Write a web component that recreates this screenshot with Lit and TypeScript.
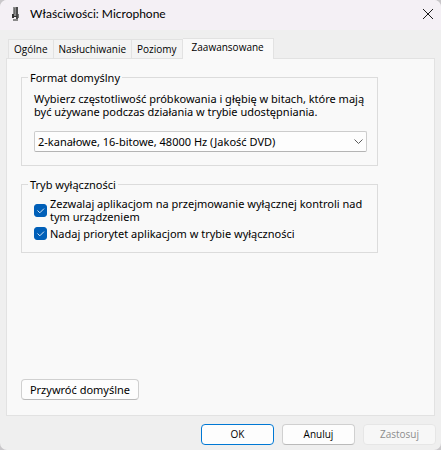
import { LitElement, html, css, svg } from "lit";
import { customElement, state } from "lit/decorators.js";

const TABS = ["Ogólne", "Nasłuchiwanie", "Poziomy", "Zaawansowane"];

@customElement("app-root")
export class AppRoot extends LitElement {
  @state() private active = 3;

  static styles = css`
    :host {
      display: block;
      background: #c9c7ca;
    }
    * { box-sizing: border-box; }
    .window {
      display: flex;
      flex-direction: column;
      min-height: 100vh;
      border-radius: 7px;
      overflow: hidden;
      background: #efefef;
      color: #000;
      font-family: "Noto Sans", "Open Sans", sans-serif;
      font-size: 11px;
      line-height: 13px;
    }
    button, select { font: inherit; color: inherit; margin: 0; }
    .titlebar {
      display: flex;
      align-items: center;
      height: 30px;
      padding: 0 5px 2px 10px;
      background: #f4f0f5;
    }
    .mic { width: 12px; height: 16px; }
    .title {
      flex: 1;
      margin: 0 0 0 8px;
      font-family: Lato, "Noto Sans", sans-serif;
      font-size: 12px;
      font-weight: 400;
      line-height: 16px;
    }
    .close {
      display: flex;
      padding: 2px;
      border: 0;
      background: none;
    }
    .close svg { width: 12px; height: 12px; }
    .tabs {
      display: flex;
      align-items: flex-end;
      height: 28px;
      padding: 0 8px;
    }
    .tab {
      height: 19px;
      padding: 0 5px;
      border: 1px solid #e2e2e2;
      border-width: 1px 1px 0 0;
      background: #f3f3f3;
      font-family: "Open Sans", sans-serif;
      font-size: 10px;
      white-space: nowrap;
    }
    .tab:first-child { border-left-width: 1px; }
    .tab.active {
      height: 21px;
      margin-bottom: -1px;
      padding: 0 9px 3px;
      background: #f9f9f9;
      z-index: 1;
    }
    .panel {
      flex: 1;
      display: flex;
      flex-direction: column;
      align-items: flex-start;
      margin: 0 6px;
      padding: 12px 56px 15px 14px;
      border: 1px solid #e2e2e2;
      background: #f9f9f9;
    }
    .group {
      align-self: stretch;
      min-width: 0;
      margin: 0 0 12px;
      padding: 8px 10px 13px 12px;
      border: 1px solid #dcdcdc;
    }
    .group.checks { padding: 6px 10px 12px 12px; }
    legend { margin-left: -6px; padding: 0 2px; }
    .text { margin: 0; }
    .combo { position: relative; margin-top: 13px; }
    .combo select {
      display: block;
      width: 100%;
      height: 21px;
      padding: 0 24px 0 3px;
      border: 1px solid #cccccc;
      border-bottom-color: #b4b4b4;
      border-radius: 2px;
      background: #fdfdfd;
      appearance: none;
    }
    .combo svg {
      position: absolute;
      right: 4px;
      top: 7px;
      width: 9px;
      height: 7px;
      pointer-events: none;
    }
    .check { display: flex; align-items: center; gap: 3px; }
    .check + .check { margin-top: 4px; }
    .box { display: grid; flex: none; width: 13px; height: 13px; }
    .box input, .box svg { grid-area: 1 / 1; width: 13px; height: 13px; margin: 0; }
    .box input {
      appearance: none;
      border: 1px solid #868686;
      border-radius: 3px;
      background: #f6f6f6;
    }
    .box input:checked { border-color: #005fb8; background: #005fb8; }
    .box svg { pointer-events: none; }
    .btn {
      height: 21px;
      padding: 0;
      border: 1px solid #d0d0d0;
      border-bottom-color: #bababa;
      border-radius: 4px;
      background: #fdfdfd;
    }
    .restore { width: 118px; margin-top: auto; }
    .footer {
      display: flex;
      justify-content: flex-end;
      gap: 8px;
      padding: 8px 5px 5px;
      font-family: "Open Sans", sans-serif;
      font-size: 10px;
    }
    .footer .btn { width: 73px; }
    .footer .primary { border-color: #0078d4; }
    .footer .btn:disabled { border-color: #e6e6e6; background: #f7f7f7; color: #8d8d8d; }
  `;

  private check(label: string) {
    return html`<label class="check">
      <span class="box">
        <input type="checkbox" checked />
        <svg viewBox="0 0 13 13" aria-hidden="true">
          ${svg`<path d="M3.5 6.5 5.8 8.8 10 4.6" fill="none" stroke="#d5e6f6" />`}
        </svg>
      </span>
      <span>${label}</span>
    </label>`;
  }

  render() {
    return html`
      <div class="window">
      <header class="titlebar">
        <svg class="mic" viewBox="0 0 12 16" aria-hidden="true">
          <path d="M3 1h5v9H3z" fill="#8c8c8c" />
          <path d="M6 1h2v13H6z" fill="#4c4c4c" />
          <path d="M4 2h1v6H4z" fill="#6a6a6a" />
          <path d="M2 8h2v2h3v1H4v1H2z" fill="#333" />
          <path d="M8 8h1v4H8z" fill="#777" />
          <path d="M3 13h5v2H3z" fill="#8a8a8a" />
        </svg>
        <h1 class="title">Właściwości: Microphone</h1>
        <button class="close" aria-label="Zamknij">
          <svg viewBox="0 0 12 12"><path d="M1 1 11 11M11 1 1 11" stroke="#1a1a1a" fill="none" /></svg>
        </button>
      </header>
      <div class="tabs" role="tablist">
        ${TABS.map(
          (name, i) => html`<button
            class="tab ${i === this.active ? "active" : ""}"
            role="tab"
            aria-selected=${i === this.active}
            @click=${() => (this.active = i)}
          >${name}</button>`
        )}
      </div>
      <main class="panel" role="tabpanel">
        <fieldset class="group">
          <legend>Format domyślny</legend>
          <p class="text" id="format-text">
            Wybierz częstotliwość próbkowania i głębię w bitach, które mają być używane podczas działania w trybie udostępniania.
          </p>
          <div class="combo">
            <select aria-labelledby="format-text">
              <option>2-kanałowe, 16-bitowe, 48000 Hz (Jakość DVD)</option>
            </select>
            <svg viewBox="0 0 9 7" aria-hidden="true"><path d="M.5 1.5l4 4 4-4" fill="none" stroke="#5c5c5c" /></svg>
          </div>
        </fieldset>
        <fieldset class="group checks">
          <legend>Tryb wyłączności</legend>
          ${this.check("Zezwalaj aplikacjom na przejmowanie wyłącznej kontroli nad tym urządzeniem")}
          ${this.check("Nadaj priorytet aplikacjom w trybie wyłączności")}
        </fieldset>
        <button class="btn restore">Przywróć domyślne</button>
      </main>
      <footer class="footer">
        <button class="btn primary">OK</button>
        <button class="btn">Anuluj</button>
        <button class="btn" disabled>Zastosuj</button>
      </footer>
      </div>
    `;
  }
}
